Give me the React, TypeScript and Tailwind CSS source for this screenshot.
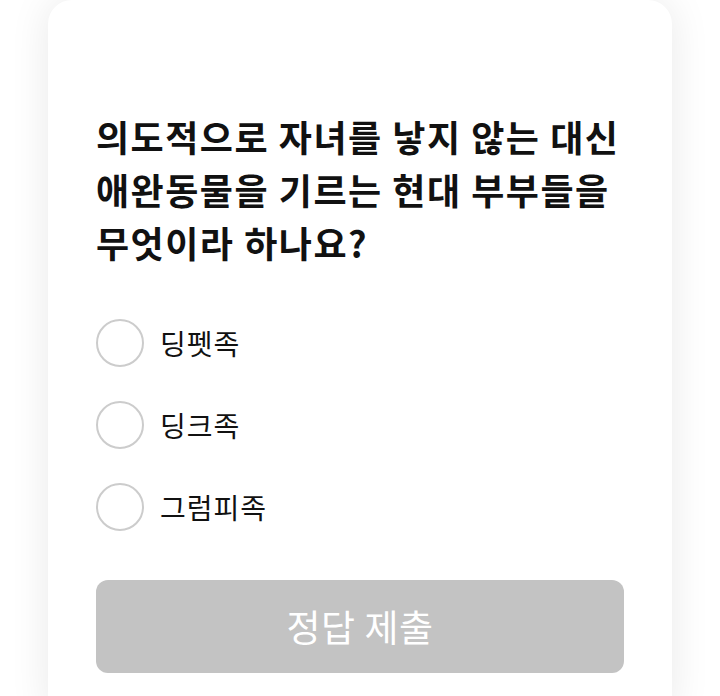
import { useState } from 'react';

const options = ['딩펫족', '딩크족', '그럼피족'];

export default function App() {
  const [selected, setSelected] = useState<number | null>(null);

  return (
    <div
      className="min-h-[696px] bg-white px-12"
      style={{ fontFamily: '"Noto Sans CJK KR", "Noto Sans", sans-serif' }}
    >
      <div className="rounded-3xl bg-white px-12 pt-[110px] pb-12 shadow-[0_0_40px_rgba(0,0,0,0.09)]">
        <h1 className="break-keep text-[36px] font-bold leading-[53px] tracking-[1.5px] text-[#111]">
          의도적으로 자녀를 낳지 않는 대신 애완동물을 기르는 현대 부부들을 무엇이라 하나요?
        </h1>

        <div className="mt-[50px] flex flex-col gap-[34px]">
          {options.map((opt, i) => (
            <button
              key={opt}
              onClick={() => setSelected(i)}
              className="flex items-center gap-4 text-left"
            >
              <span
                className={`h-12 w-12 shrink-0 rounded-full border-2 ${
                  selected === i ? 'border-[#333]' : 'border-[#cccccc]'
                }`}
              />
              <span className="text-[28px] leading-none tracking-[1px] text-[#111]">{opt}</span>
            </button>
          ))}
        </div>

        <button
          disabled={selected === null}
          className="mt-[49px] flex h-[93px] w-full items-center justify-center rounded-xl bg-[#c3c3c3] text-[37px] tracking-[0.5px] text-white"
        >
          정답 제출
        </button>
      </div>
    </div>
  );
}
